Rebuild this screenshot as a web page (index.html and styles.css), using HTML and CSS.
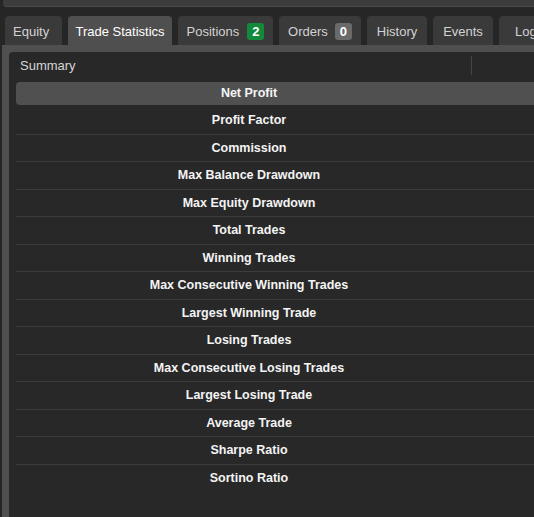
FILE: index.html
```html
<!DOCTYPE html>
<html>
<head>
<meta charset="utf-8">
<link rel="stylesheet" href="styles.css">
</head>
<body>
<div class="topbar"></div>
<div class="tabs">
  <div class="tab t-equity">Equity</div>
  <div class="tab active t-stats">Trade Statistics</div>
  <div class="tab t-positions">Positions <span class="badge green">2</span></div>
  <div class="tab t-orders">Orders <span class="badge grey">0</span></div>
  <div class="tab t-std">History</div>
  <div class="tab t-std">Events</div>
  <div class="tab t-log">Log</div>
</div>
<div class="content">
  <div class="panel">
    <div class="header">
      <div class="hcell">Summary</div>
      <div class="hdiv"></div>
    </div>
    <div class="rows">
      <div class="row selected"><div class="cell">Net Profit</div></div>
      <div class="row"><div class="cell">Profit Factor</div></div>
      <div class="row"><div class="cell">Commission</div></div>
      <div class="row"><div class="cell">Max Balance Drawdown</div></div>
      <div class="row"><div class="cell">Max Equity Drawdown</div></div>
      <div class="row"><div class="cell">Total Trades</div></div>
      <div class="row"><div class="cell">Winning Trades</div></div>
      <div class="row"><div class="cell">Max Consecutive Winning Trades</div></div>
      <div class="row"><div class="cell">Largest Winning Trade</div></div>
      <div class="row"><div class="cell">Losing Trades</div></div>
      <div class="row"><div class="cell">Max Consecutive Losing Trades</div></div>
      <div class="row"><div class="cell">Largest Losing Trade</div></div>
      <div class="row"><div class="cell">Average Trade</div></div>
      <div class="row"><div class="cell">Sharpe Ratio</div></div>
      <div class="row last"><div class="cell">Sortino Ratio</div></div>
    </div>
  </div>
</div>
</body>
</html>
```
FILE: styles.css
```css
html, body {
  margin: 0;
  padding: 0;
  height: 100%;
  overflow: hidden;
}
body {
  background: #262626;
  font-family: "Liberation Sans", Arial, sans-serif;
  font-size: 13px;
  display: flex;
  flex-direction: column;
}
.topbar {
  height: 6px;
  margin-left: 3px;
  background: #3c3c3c;
  border-bottom: 1px solid #4a4a4a;
  border-bottom-left-radius: 4px;
  margin-bottom: 9px;
  flex: none;
}
.tabs {
  display: flex;
  gap: 6px;
  padding-left: 5px;
  height: 29px;
  flex: none;
  white-space: nowrap;
  overflow: hidden;
}
.tab {
  display: flex;
  align-items: center;
  justify-content: center;
  box-sizing: border-box;
  padding-top: 1px;
  background: #3a3a3a;
  color: #d2d2d2;
  border-radius: 4px 4px 0 0;
  flex: none;
}
.tab.active {
  background: #4f4f4f;
  color: #ffffff;
}
.t-equity {
  width: 57px;
  justify-content: flex-start;
  padding-left: 8px;
}
.t-stats {
  width: 104px;
}
.t-positions {
  width: 95px;
}
.t-orders {
  width: 82px;
}
.t-std {
  width: 60px;
}
.t-log {
  width: 60px;
  justify-content: flex-start;
  padding-left: 16px;
}
.badge {
  display: inline-block;
  height: 17px;
  line-height: 17px;
  padding: 0 5px;
  border-radius: 3px;
  color: #fff;
  font-weight: bold;
  margin-left: 8px;
}
.badge.green {
  background: #138a3b;
}
.badge.grey {
  background: #6a6a6a;
  margin-left: 7px;
}
.content {
  flex: 1;
  margin-left: 2px;
  background: #4f4f4f;
  padding: 7px 0 0 7px;
  display: flex;
}
.panel {
  flex: 1;
  background: #282828;
  border-top-left-radius: 4px;
  padding-left: 7px;
}
.header {
  height: 27.5px;
  display: flex;
  align-items: center;
  width: 600px;
}
.hcell {
  width: 451px;
  padding-left: 4px;
  color: #d6d6d6;
}
.hdiv {
  width: 1px;
  height: 19px;
  background: #454545;
}
.rows {
  width: 600px;
}
.row {
  height: 27.5px;
  box-sizing: border-box;
  border-bottom: 1px solid #3c3c3c;
  display: flex;
  align-items: center;
}
.row.last {
  border-bottom: none;
}
.row.selected {
  border-bottom: none;
  padding: 2.5px 0;
}
.row.selected .cell {
  background: #505050;
  border-radius: 4px 0 0 4px;
  height: 100%;
  width: 100%;
  padding-right: 134px;
}
.cell {
  width: 466px;
  display: flex;
  align-items: center;
  justify-content: center;
  color: #f4f4f4;
  font-weight: bold;
  font-size: 12.5px;
  box-sizing: border-box;
}
```
